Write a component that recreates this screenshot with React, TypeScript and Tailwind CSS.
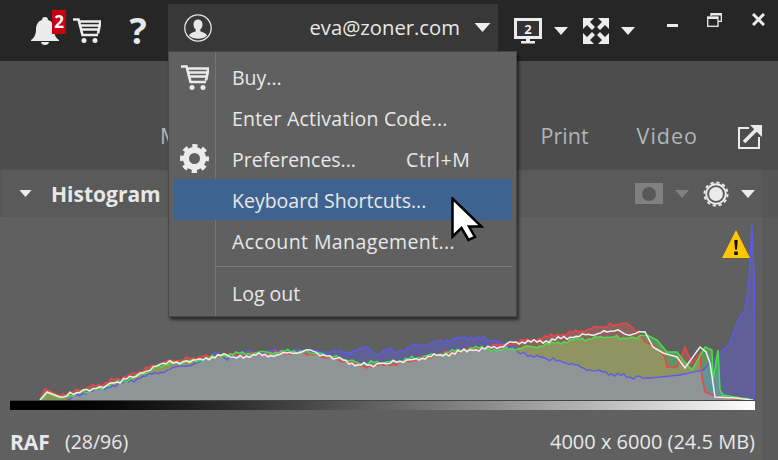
import React from 'react';

type Pt = [number, number];

const WHITE: Pt[] = [[40,400],[47,392],[60,397],[80,392],[100,387],[117,382],[133,377],[150,370],[163,363],[183,362],[200,359],[227,355],[237,358],[253,355],[277,355],[310,350],[323,355],[343,360],[358,365],[370,365],[390,363],[410,360],[440,355],[473,350],[500,347],[513,342],[537,342],[573,337],[607,332],[618,330],[630,335],[645,332],[653,347],[663,353],[677,357],[685,368],[700,347],[706,352],[710,363],[715,397],[735,398],[753,400]];
const RED: Pt[] = [[40,400],[45,389],[60,396],[80,390],[105,383],[130,375],[165,362],[180,360],[200,357],[230,355],[300,352],[320,356],[345,361],[360,366],[390,365],[440,354],[500,345],[560,335],[600,327],[620,324],[630,325],[640,335],[645,342],[653,345],[665,357],[667,367],[677,367],[685,347],[692,363],[700,353],[702,377],[705,392],[718,397],[753,400]];
const GREEN: Pt[] = [[42,400],[47,393],[60,398],[80,393],[100,388],[133,378],[165,364],[200,360],[230,354],[300,351],[323,354],[343,359],[358,363],[390,362],[440,354],[473,348],[500,350],[540,346],[573,340],[607,337],[630,338],[647,335],[657,340],[667,352],[677,352],[683,360],[692,370],[705,347],[712,350],[713,380],[718,350],[720,390],[723,395],[753,400]];
const BLUE: Pt[] = [[67,400],[83,393],[110,387],[140,378],[167,370],[200,362],[217,353],[227,360],[240,353],[300,350],[323,352],[347,352],[368,348],[378,355],[390,348],[397,353],[410,347],[447,340],[477,337],[500,342],[515,347],[518,353],[540,357],[563,362],[590,370],[630,377],[650,378],[680,375],[703,370],[715,358],[723,350],[730,343],[738,320],[745,310],[749,280],[752,225],[754,270],[755,320],[755,400]];

// control points resampled with a bit of jitter, the curve is too noisy to list by hand
const jitter = (pts: Pt[], seed: number): Pt[] => {
  const out: Pt[] = [];
  pts.forEach((p, i) => {
    if (i === pts.length - 1) {
      out.push(p);
      return;
    }
    const q = pts[i + 1];
    const n = Math.max(1, Math.floor((q[0] - p[0]) / 3));
    for (let k = 0; k < n; k++) {
      const x = p[0] + ((q[0] - p[0]) * k) / n;
      const y = p[1] + ((q[1] - p[1]) * k) / n;
      const amp = x > 645 || x < 60 ? 0 : k === 0 ? 0.5 : 2.4;
      out.push([x, y + amp * Math.sin(x * 1.7 + seed) * Math.cos(x * 0.63 + seed * 2)]);
    }
  });
  return out;
};

const toLine = (pts: Pt[]) => pts.map((p) => `${p[0].toFixed(1)},${p[1].toFixed(1)}`).join(' ');
const toArea = (pts: Pt[]) => `${pts[0][0]},400 ${toLine(pts)} ${pts[pts.length - 1][0]},400`;

const Histogram = () => {
  const r = jitter(RED, 1);
  const g = jitter(GREEN, 2.3);
  const b = jitter(BLUE, 3.1);
  const w = jitter(WHITE, 1.6);
  return (
    <svg viewBox="10 217 745 183" className="block h-[183px] w-[745px] isolate bg-[#606060]">
      <polygon points={toArea(r)} fill="#2f0000" className="mix-blend-plus-lighter" />
      <polygon points={toArea(g)} fill="#003400" className="mix-blend-plus-lighter" />
      <polygon points={toArea(b)} fill="#000036" className="mix-blend-plus-lighter" />
      <polyline points={toLine(b)} fill="none" stroke="#5c5ce6" strokeWidth="1.4" />
      <polyline points={toLine(r)} fill="none" stroke="#e84848" strokeWidth="1.6" />
      <polyline points={toLine(g)} fill="none" stroke="#48e048" strokeWidth="1.5" />
      <polyline points={toLine(w)} fill="none" stroke="#f0f0f0" strokeWidth="1.5" />
    </svg>
  );
};

const Caret = ({ className = '' }: { className?: string }) => (
  <svg viewBox="0 0 14 8" className={`h-2 w-3.5 fill-[#ececec] ${className}`}>
    <path d="M0 0h14L7 8z" />
  </svg>
);

const CartIcon = () => (
  <svg viewBox="0 0 28 25" className="h-[25px] w-7 text-[#ececec]">
    <path d="M0 1.500h5.500L9.500 17H25M6.500 3.500H27.500L25 15.500M8 7.500H26M8.500 11.500H25.500" fill="none" stroke="currentColor" strokeWidth="2.600" />
    <circle cx="11" cy="22.500" r="2.500" fill="currentColor" />
    <circle cx="22" cy="22.500" r="2.500" fill="currentColor" />
  </svg>
);

const BellIcon = () => (
  <svg viewBox="0 0 28 28" className="h-7 w-7 fill-[#ececec]">
    <path d="M14 0c2 0 3 1 3 3c4 1 6 5 6 9c0 6 2 9 5 11v1H0v-1c3-2 5-5 5-11c0-4 2-8 6-9c0-2 1-3 3-3zM10 25h8c0 2-2 3-4 3s-4-1-4-3z" />
  </svg>
);

const UserIcon = () => (
  <svg viewBox="0 0 28 28" className="h-7 w-7">
    <circle cx="14" cy="14" r="13.200" fill="none" stroke="#e8e8e8" strokeWidth="1.300" />
    <path d="M14 5.500c2.800 0 4.500 2.200 4.500 5c0 2.200-1 4-2.200 5v1.800c2.500 1 6 2 6.700 4.200c-2 2.100-5.400 3.300-9 3.300s-7-1.200-9-3.300c.7-2.200 4.200-3.200 6.700-4.200v-1.800c-1.200-1-2.200-2.800-2.200-5c0-2.800 1.700-5 4.500-5z" fill="#e8e8e8" />
  </svg>
);

const MonitorIcon = () => (
  <svg viewBox="0 0 28 26" className="h-[26px] w-7">
    <path d="M0 0h28v21H16v2h5v2.500H7V23h5v-2H0z" fill="#ececec" />
    <rect x="3" y="3" width="22" height="15" fill="#333" />
    <text x="14" y="16" textAnchor="middle" fontSize="13" fontWeight="700" fill="#ececec" fontFamily="'Open Sans', sans-serif">2</text>
  </svg>
);

const FullscreenIcon = () => {
  const corner = '0,0 11,0 7,4 12,9 9,12 4,7 0,11';
  return (
    <svg viewBox="0 0 26 26" className="h-[26px] w-[26px] fill-[#ececec]">
      <polygon points={corner} />
      <polygon points={corner} transform="translate(26 0) scale(-1 1)" />
      <polygon points={corner} transform="translate(0 26) scale(1 -1)" />
      <polygon points={corner} transform="translate(26 26) scale(-1 -1)" />
    </svg>
  );
};

const GearIcon = () => (
  <svg viewBox="0 0 29 29" className="h-[29px] w-[29px]" fill="none" stroke="#ececec">
    <circle cx="14.500" cy="14.500" r="8.500" strokeWidth="6" />
    <circle cx="14.500" cy="14.500" r="12.500" strokeWidth="4" strokeDasharray="5.200 4.617" strokeDashoffset="2.600" />
  </svg>
);

const SunIcon = () => (
  <svg viewBox="0 0 28 28" className="h-[26px] w-[26px]">
    <circle cx="14" cy="14" r="7.500" fill="#ececec" />
    <circle cx="14" cy="14" r="10.500" fill="none" stroke="#ececec" strokeWidth="2" />
    <circle cx="14" cy="14" r="12.500" fill="none" stroke="#ececec" strokeWidth="2" strokeDasharray="3.500 3.050" />
  </svg>
);

const ExportIcon = () => (
  <svg viewBox="0 0 24 25" className="h-[25px] w-6 text-[#ececec]" fill="none" stroke="currentColor">
    <path d="M11 4H1v20h20V13" strokeWidth="2" />
    <path d="M6 18L19 5" strokeWidth="3.500" />
    <path d="M12 1h12v12z" fill="currentColor" stroke="none" />
  </svg>
);

const CursorIcon = () => (
  <svg viewBox="0 0 33 45" className="h-[45px] w-[33px]">
    <path d="M1.500 1.500V39.500L10.500 31L17.500 43L24 40L18 29.500H30.500z" fill="#fff" stroke="#000" strokeWidth="2.500" />
  </svg>
);

const WarningIcon = () => (
  <svg viewBox="0 0 28 28" className="h-7 w-7">
    <path d="M14 0L28 28H0z" fill="#ffc800" />
    <path d="M12.300 10h3.400l-.7 9.500h-2zM12.200 21.500h3.600V25h-3.600z" fill="#111" />
  </svg>
);

const MENU_ITEMS = [
  { label: 'Buy...', track: '' },
  { label: 'Enter Activation Code...', track: 'tracking-[0.2px]' },
  { label: 'Preferences...', track: '' },
  { label: 'Keyboard Shortcuts...', track: '' },
  { label: 'Account Management...', track: 'tracking-[0.4px]' },
];

const UserMenu = () => (
  <div className="absolute left-0 top-[47px] z-10 h-[266px] w-[349px] border border-[#484848] bg-[#606060] pt-[4px] text-[19.500px] text-[#e8e8e8] shadow-[2px_3px_3px_rgba(0,0,0,0.55)]">
    <div className="absolute bottom-0 left-[46px] top-0 w-px bg-[#757575]" />
    {MENU_ITEMS.map((item, i) => (
      <div
        key={item.label}
        className={`relative mx-[4px] flex h-[41px] items-center pl-[59px] pt-[3px] ${i === 3 ? 'bg-[#3f6391]' : ''}`}
      >
        {i === 0 && (
          <span className="absolute left-[8px] top-[9px]">
            <CartIcon />
          </span>
        )}
        {i === 2 && (
          <span className="absolute left-[7px] top-[6px]">
            <GearIcon />
          </span>
        )}
        <span className={item.track}>{item.label}</span>
        {i === 2 && <span className="absolute left-[233px] tracking-[0.6px]">Ctrl+M</span>}
      </div>
    ))}
    <div className="ml-[47px] mr-[4px] mt-[5px] h-px bg-[#7a7a7a]" />
    <div className="mt-[6px] flex h-[41px] items-center pl-[63px]">Log out</div>
  </div>
);

export default function App() {
  return (
    <div className="relative flex h-[460px] w-[778px] flex-col overflow-hidden bg-[#606060] font-['Open_Sans',sans-serif] text-[#e8e8e8]">
      {/* title bar */}
      <div className="flex h-[61px] items-center bg-[#262626] pl-[31px]">
        <div className="relative">
          <BellIcon />
          <span className="absolute left-[21px] top-[-7px] flex h-6 w-[14px] items-center justify-center bg-[#c8000f] text-[17px] font-bold text-white">2</span>
        </div>
        <span className="ml-[14px]">
          <CartIcon />
        </span>
        <span className="ml-[27px] w-5 text-center text-[36px] font-bold leading-none">?</span>
        <div className="relative mb-[10px] ml-[20px] flex h-[47px] w-[330px] items-center self-end bg-[#383838] pl-[16px] pr-[6px]">
          <UserIcon />
          <span className="ml-auto text-[20.250px]">eva@zoner.com</span>
          <Caret className="ml-[13px] h-[9px] w-[19px]" />
          <UserMenu />
        </div>
        <span className="ml-[16px]">
          <MonitorIcon />
        </span>
        <Caret className="ml-3" />
        <span className="ml-[15px]">
          <FullscreenIcon />
        </span>
        <Caret className="ml-[12px]" />
        <div className="ml-[32px] mt-[24px] h-[3px] w-[11px] self-start bg-[#ececec]" />
        <svg viewBox="0 0 15 14" className="ml-[29px] mt-[13px] h-[14px] w-[15px] self-start" fill="none" stroke="#ececec" strokeWidth="1.300">
          <path d="M4 3V.7h10.300v7.600H11" />
          <rect x=".7" y="4" width="10.300" height="9.300" />
          <path d="M.7 5h10.300M4 1.500h10" strokeWidth="2" />
        </svg>
        <svg viewBox="0 0 13 13" className="ml-[30px] mt-[13px] h-[13px] w-[13px] self-start" stroke="#ececec" strokeWidth="3">
          <path d="M1 1l11 11M12 1L1 12" />
        </svg>
      </div>

      {/* module tabs */}
      <div className="flex h-[109px] items-center bg-[#4d4d4d] pl-[160px] pr-4 pt-[41px] text-[21.500px] text-[#b0b5b8]">
        <span>Manager</span>
        <span className="ml-auto">Print</span>
        <span className="ml-[48px] tracking-[1px]">Video</span>
        <span className="ml-[40px]">
          <ExportIcon />
        </span>
      </div>

      {/* histogram panel */}
      <div className="flex h-[47px] bg-[#565656] pr-4">
        <div className="ml-[3px] flex flex-1 items-center bg-[#5a5a5a] pl-[15px] pr-[7px]">
          <Caret className="h-[7px] w-[15px]" />
          <span className="ml-[18px] pt-[3px] text-[21px] font-bold">Histogram</span>
          <div className="ml-auto flex h-[21px] w-7 items-center justify-center bg-[#808080]">
            <div className="h-[14px] w-[14px] rounded-full bg-[#585858]" />
          </div>
          <svg viewBox="0 0 14 8" className="ml-[12px] h-2 w-3.5 fill-[#808080]">
            <path d="M0 0h14L7 8z" />
          </svg>
          <span className="ml-[14px]">
            <SunIcon />
          </span>
          <Caret className="ml-[12px]" />
        </div>
      </div>
      <div className="relative flex-1 pl-[10px]">
        <div className="absolute bottom-0 right-0 top-0 w-4 bg-[#5a5a5a]" />
        <Histogram />
        <div className="h-px w-[745px] bg-[#444]" />
        <div className="h-[9px] w-[745px] bg-gradient-to-r from-black to-white" />
        <div className="mt-[20px] flex w-[745px] items-center leading-6">
          <span className="text-[21px] font-bold">RAF</span>
          <span className="ml-[15px] text-[19.500px]">(28/96)</span>
          <span className="ml-auto text-[20px]">4000 x 6000 (24.5 MB)</span>
        </div>
        <span className="absolute left-[722px] top-[13px]">
          <WarningIcon />
        </span>
      </div>

      <span className="absolute left-[451px] top-[197px] z-20">
        <CursorIcon />
      </span>
    </div>
  );
}
